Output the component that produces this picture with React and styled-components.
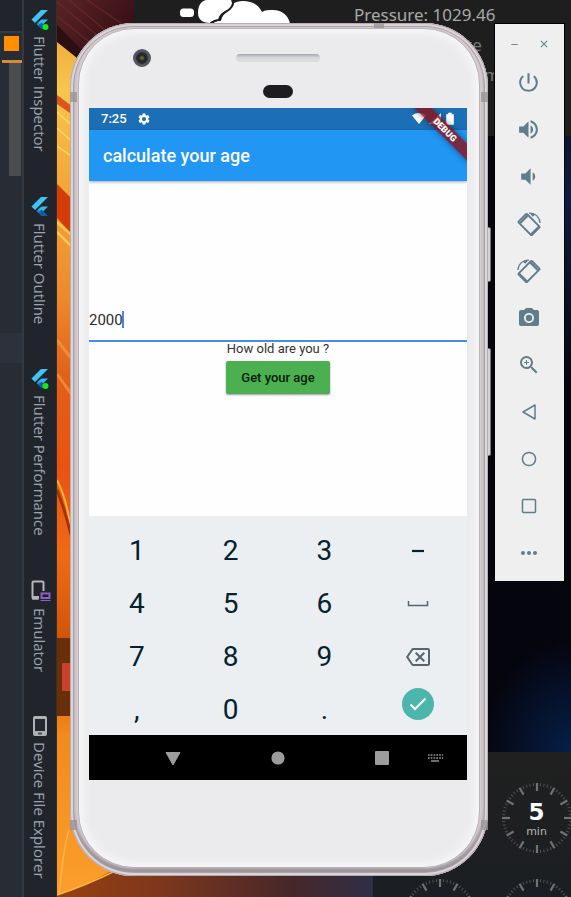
import React, { useState } from "react";
import styled, { createGlobalStyle } from "styled-components";
import {
  MdClose,
  MdMoreHoriz,
  MdOutlineBackspace,
  MdPhotoCamera,
  MdPowerSettingsNew,
  MdRemove,
  MdSettings,
  MdVolumeDown,
  MdVolumeUp,
  MdZoomIn,
} from "react-icons/md";

const GlobalStyle = createGlobalStyle`
  *, *::before, *::after { box-sizing: border-box; }
  body { margin: 0; background: #21252b; }
  button, input { font: inherit; color: inherit; margin: 0; padding: 0; border: 0; background: none; }
  button { cursor: pointer; }
  svg { display: block; flex: none; }
`;

const Page = styled.div`
  display: flex;
  min-height: 100vh;
  overflow: hidden;
  font-family: Roboto, "Liberation Sans", sans-serif;
`;

/* ---------- IDE edge ---------- */

const EditorEdge = styled.aside`
  display: flex;
  flex-direction: column;
  flex: none;
  width: 24px;
  border-right: 2px solid #333841;
  background: #282c34;
`;

const EdgeHeader = styled.div`
  height: 33px;
  border-bottom: 2px solid #333841;
  background: #21252b;
`;

const WarningMark = styled.div`
  width: 15px;
  height: 15px;
  margin: 3px 0 9px 4px;
  background: #ff8f00;
`;

const ErrorStripe = styled.div`
  height: 3px;
  margin-left: 2px;
  background: #d98a35;
`;

const ScrollThumb = styled.div`
  width: 12px;
  height: 113px;
  margin-left: 9px;
  background: #4b4d50;
`;

const CurrentLine = styled.div`
  height: 30px;
  margin-top: 157px;
  background: #2c313c;
`;

const ToolStrip = styled.nav`
  display: flex;
  flex-direction: column;
  align-items: center;
  gap: 44px;
  flex: none;
  width: 33px;
  padding: 9px 1px 0 0;
  border-right: 1px solid #34302c;
  background: #21252b;
`;

const ToolTab = styled.button`
  display: flex;
  flex-direction: column;
  align-items: center;
  gap: 6px;
  color: #9da5b4;
  font-family: "Open Sans", "Noto Sans", sans-serif;
  font-size: 15px;
  line-height: 22px;
  white-space: nowrap;
`;

const TabLabel = styled.span`
  writing-mode: vertical-rl;
`;

/* ---------- Desktop ---------- */

const Desktop = styled.main`
  position: relative;
  z-index: 0;
  display: flex;
  align-items: flex-start;
  flex: 1;
  gap: 7px;
  min-width: 0;
  padding: 23px 7px 21px 13px;
  overflow: hidden;
  background: #05050e;
`;

const WallpaperArt = styled.svg`
  position: absolute;
  inset: 0;
  z-index: -2;
  width: 100%;
  height: 100%;
`;

const WeatherWidget = styled.section`
  position: absolute;
  top: 0;
  left: 77px;
  right: 0;
  z-index: -1;
  display: flex;
  justify-content: space-between;
  height: 136px;
  padding-left: 46px;
  background: #1f1e1e;
`;

const WeatherFacts = styled.div`
  display: flex;
  flex-direction: column;
  width: 217px;
  color: #a9a9a9;
  font-family: "Noto Sans", sans-serif;
  font-size: 17px;
  line-height: 30px;
`;

const Fact = styled.span`
  margin-left: ${(p) => p.$indent || 0}px;
  color: ${(p) => (p.$dim ? "#777777" : "#a9a9a9")};
`;

const TimerWidget = styled.section`
  position: absolute;
  right: 0;
  bottom: 0;
  z-index: -1;
  display: grid;
  grid-template-columns: 97px 97px;
  grid-auto-rows: 96px;
  width: 198px;
  height: 145px;
  padding: 18px 0 0 18px;
  overflow: hidden;
  background: linear-gradient(#202020, #1b1e22);
`;

const Dial = styled.div`
  display: grid;
  place-items: center;

  > * { grid-area: 1 / 1; }
`;

const DialText = styled.div`
  display: flex;
  flex-direction: column;
  align-items: center;
  color: #b5b5b5;
  font-family: "DejaVu Sans", sans-serif;
  font-size: 11px;
  line-height: 13px;
`;

const DialValue = styled.strong`
  color: #ffffff;
  font-size: 23px;
  line-height: 26px;
`;

/* ---------- Phone ---------- */

const PhoneFrame = styled.section`
  position: relative;
  display: flex;
  align-self: stretch;
  flex: 1;
  min-width: 0;
  padding: 5px 8px 8px;
  border-radius: 64px;
  background: #d3cbcf;
  box-shadow:
    inset 0 0 0 1px #b5adb1,
    inset 0 0 0 3px #dcd4d8,
    inset 0 0 0 4px #a9a2a6,
    inset 0 -4px 3px 4px #9b9498;
`;

const PhoneBody = styled.div`
  display: flex;
  flex-direction: column;
  flex: 1;
  min-width: 0;
  padding: 0 12px 0 10px;
  border: 1px solid #b9b2b6;
  border-radius: 56px;
  background: #ebebed;
  box-shadow: inset 0 0 8px 4px #f7f7f9;
`;

const SideKey = styled.span`
  position: absolute;
  top: ${(p) => p.$top}px;
  right: -3px;
  z-index: -1;
  width: 8px;
  height: ${(p) => p.$length}px;
  border: 1px solid #77757a;
  border-radius: 2px;
  background: #d5d3d6;
`;

const AntennaBand = styled.span`
  position: absolute;
  top: ${(p) => p.$top};
  left: ${(p) => p.$left};
  width: ${(p) => (p.$across ? 10 : 7)}px;
  height: ${(p) => (p.$across ? 5 : 10)}px;
  background: #9c9498;
  opacity: 0.8;
`;

const TopBezel = styled.div`
  display: grid;
  grid-template-columns: 1fr 84px 1fr;
  flex: none;
  height: 79px;
  padding-top: 20px;
`;

const CameraLens = styled.div`
  width: 18px;
  height: 18px;
  margin-left: 44px;
  border: 3px solid #55575c;
  border-radius: 50%;
  background: radial-gradient(circle at 50% 50%, #6a6428 0 1px, #22252b 3px, #2d3036 6px);
`;

const EarPiece = styled.div`
  display: flex;
  flex-direction: column;
  align-items: center;
  gap: 23px;
  padding-top: 5px;
`;

const SpeakerSlot = styled.div`
  width: 84px;
  height: 8px;
  border-radius: 4px;
  background: linear-gradient(#a2a6b0, #d6d8dd 45%, #dddee1);
`;

const Sensor = styled.div`
  width: 30px;
  height: 13px;
  border-radius: 7px;
  background: #1d1d21;
`;

const BottomBezel = styled.div`
  flex: none;
  height: 87px;
`;

const Screen = styled.div`
  position: relative;
  display: flex;
  flex-direction: column;
  flex: 1;
  overflow: hidden;
  background: #fefefe;
`;

const StatusBar = styled.div`
  display: flex;
  align-items: center;
  flex: none;
  gap: 10px;
  height: 22px;
  padding: 0 12px;
  background: #1c6fb5;
  color: #ffffff;
  font-size: 13px;
  line-height: 22px;
  font-weight: 500;
`;

const StatusIcons = styled.div`
  display: flex;
  align-items: center;
  gap: 3px;
  margin-left: auto;
`;

const AppBar = styled.header`
  display: flex;
  align-items: center;
  flex: none;
  height: 51px;
  padding: 0 14px;
  background: #2196f3;
  box-shadow: 0 1px 3px rgba(0, 0, 0, 0.35);
  color: #ffffff;
`;

const AppTitle = styled.h1`
  margin: 0;
  font-size: 18px;
  line-height: 24px;
  font-weight: 500;
`;

const DebugBanner = styled.span`
  position: absolute;
  top: 16px;
  right: -18px;
  width: 80px;
  height: 12px;
  background: rgba(140, 16, 24, 0.8);
  box-shadow: 0 0 6px rgba(0, 0, 0, 0.45);
  color: #ffffff;
  font-size: 9px;
  line-height: 12px;
  font-weight: 900;
  text-align: center;
  transform: rotate(45deg);
`;

const AgeForm = styled.form`
  display: flex;
  flex-direction: column;
  align-items: center;
  justify-content: center;
  flex: 1;
  min-height: 160px;
`;

const FieldRow = styled.label`
  display: flex;
  align-items: center;
  align-self: stretch;
  height: 47px;
  padding-top: 4px;
  border-bottom: 2px solid #4390e0;
`;

const YearInput = styled.input`
  height: 20px;
  outline: none;
  color: #2b2b2b;
  font-size: 15px;
  line-height: 20px;
  caret-color: transparent;
`;

const Caret = styled.span`
  width: 2px;
  height: 17px;
  margin-left: -1px;
  background: #4285f4;
`;

const Question = styled.p`
  margin: 0 0 5px;
  color: #333333;
  font-size: 13px;
  line-height: 14px;
`;

const SubmitButton = styled.button`
  height: 33px;
  margin-bottom: 8px;
  padding: 0 15px;
  border-radius: 2px;
  background: #4caf50;
  box-shadow: 0 1px 2px rgba(0, 0, 0, 0.4);
  color: #06210a;
  font-size: 13px;
  line-height: 16px;
  font-weight: 500;
`;

const Keypad = styled.div`
  display: grid;
  grid-template-columns: repeat(4, 1fr);
  grid-auto-rows: 53px;
  flex: none;
  padding: 7px 2px 0 1px;
  background: #ebeff2;
`;

const Key = styled.button`
  display: flex;
  align-items: center;
  justify-content: center;
  padding-top: 2px;
  color: ${(p) => (p.$muted ? "#56656e" : "#06222e")};
  font-size: 28px;
  line-height: 50px;
`;

const DoneKey = styled.button`
  align-self: start;
  justify-self: center;
  display: grid;
  place-items: center;
  width: 32px;
  height: 32px;
  margin-top: 6px;
  border-radius: 50%;
  background: #4db6ac;
`;

const NavBar = styled.nav`
  display: flex;
  align-items: center;
  flex: none;
  gap: 13px;
  height: 45px;
  padding: 0 12px 0 64px;
  background: #000000;
`;

const NavGroup = styled.div`
  display: flex;
  justify-content: space-between;
  flex: 1;
`;

const NavButton = styled.button`
  display: grid;
  place-items: center;
  width: 40px;
  height: 45px;
`;

/* ---------- Emulator toolbar ---------- */

const EmulatorBar = styled.aside`
  flex: none;
  width: 71px;
  margin-right: -1px;
  margin-left: -1px;
  padding: 0 2px 5px 0;
  border: 1px solid #000000;
  background: #efefef;
  color: #607d8b;
`;

const WindowControls = styled.div`
  display: flex;
  justify-content: space-between;
  padding: 12px 11px 7px 12px;
`;

const ControlButton = styled.button`
  display: grid;
  place-items: center;
  width: 14px;
  height: 16px;
`;

const BarButton = styled.button`
  display: grid;
  place-items: center;
  width: 100%;
  height: 47px;
`;

/* ---------- Drawings ---------- */

function FlutterLogo({ dot }) {
  return (
    <svg width="22" height="21" viewBox="0 0 22 21" aria-hidden="true">
      <path d="M12 1h7L6 14l-3.500-3.500z" fill="#40c4f4" />
      <path d="M12.500 10.500H19L12.500 17 9 13.500z" fill="#35b8ee" />
      <path d="M9 13.500l3.500 3.500L9.500 17 7.500 15z" fill="#2196d8" />
      <path d="M9 17l3.500-3.500L19 20h-6.500z" fill="#0d5ea8" />
      {dot && <circle cx="16.500" cy="18" r="3" fill="#10f010" />}
    </svg>
  );
}

function EmulatorIcon() {
  return (
    <svg width="22" height="22" viewBox="0 0 22 22" aria-hidden="true">
      <path d="M9 18.500H4.500a1 1 0 0 1-1-1v-15a1 1 0 0 1 1-1h9a1 1 0 0 1 1 1V11" fill="none" stroke="#b4b6b8" strokeWidth="2" />
      <path d="M3 16h7v3.500H3z" fill="#b4b6b8" />
      <path d="M12.500 13.500h8v4.500h-8z" fill="#211b30" stroke="#8763bd" strokeWidth="2" />
      <path d="M11.500 20.500h10" stroke="#8763bd" strokeWidth="1" />
    </svg>
  );
}

function DeviceIcon() {
  return (
    <svg width="22" height="20" viewBox="0 0 22 20" aria-hidden="true">
      <rect x="4" y="0" width="14" height="20" rx="2" fill="#b0b2b4" />
      <rect x="6" y="3" width="10" height="12" fill="#25292f" />
      <rect x="9" y="16.500" width="4" height="2" fill="#4b4d50" />
    </svg>
  );
}

function CloudArt() {
  return (
    <svg width="128" height="24" viewBox="0 0 128 24" aria-hidden="true">
      <g fill="#ffffff">
        <rect x="0" y="8.500" width="14" height="8.500" rx="3.500" />
        <path d="M18 13C18 5 22 0 27 0h24c2 4 1 8-4 11-6 1-8 5-9 9-3 0-6 1-8 3-8 0-12-4-12-10z" />
        <path d="M33 24c1-2 4-3.500 8-3.500C42 15 44 13 47 11c3-6 8-10 16-10 9 0 16 4 19 11 3-2 7-2 11-2 9 0 16 6 17 14z" />
      </g>
      <path d="M53 0c1 5-1 8-6 11-4 2-6 5-7 9-4 0-7 1-10 4" fill="none" stroke="#1f1e1e" strokeWidth="2" />
    </svg>
  );
}

function RotateIcon({ left }) {
  return (
    <svg width="24" height="24" viewBox="0 0 24 24" aria-hidden="true">
      <g transform={left ? "translate(24 0) scale(-1 1)" : undefined}>
        <rect
          x="2.500"
          y="6.500"
          width="19"
          height="12"
          rx="1"
          fill="none"
          stroke="#607d8b"
          strokeWidth="1.800"
          transform="rotate(45 12 12.500)"
        />
        <path d="M13.400 21.600 21.600 13.400 23 15.200l-7.800 7.800z" fill="#607d8b" />
        <path d="M2.200 10.400 10 2.600l1.600 1.600-7.800 7.800z" fill="#607d8b" />
        <path d="M12 1.200C18 .6 22.800 5 23 11" fill="none" stroke="#607d8b" strokeWidth="1.300" />
        <path d="M12.500 1.200 18.500 2.400 15.800 4.800z" fill="#607d8b" />
      </g>
    </svg>
  );
}

function OutlineIcon({ shape }) {
  return (
    <svg width="18" height="18" viewBox="0 0 18 18" fill="none" stroke="#607d8b" strokeWidth="1.500" aria-hidden="true">
      {shape === "back" && <path d="M15 2v14L3 9z" strokeLinejoin="round" />}
      {shape === "home" && <circle cx="9" cy="9" r="6.600" />}
      {shape === "recent" && <rect x="2.500" y="2.500" width="13" height="13" rx="1" />}
    </svg>
  );
}

function NavIcon({ shape }) {
  return (
    <svg width="16" height="16" viewBox="0 0 16 16" fill="#9c9c9c" aria-hidden="true">
      {shape === "back" && <path d="M1 2.500h14L8 15z" stroke="#9c9c9c" strokeLinejoin="round" />}
      {shape === "home" && <circle cx="8" cy="8" r="6.600" />}
      {shape === "recent" && <rect x="1" y="1" width="14" height="14" rx="1" />}
      {shape === "keyboard" && (
        <path d="M1 5h15M1 8h15" stroke="#9c9c9c" strokeWidth="1.400" strokeDasharray="1.600 1.200" />
      )}
      {shape === "keyboard" && <path d="M4 11h8" stroke="#9c9c9c" strokeWidth="1.400" />}
    </svg>
  );
}

function SignalIcons() {
  return (
    <svg width="43" height="14" viewBox="0 0 43 14" fill="#ffffff" aria-hidden="true">
      <path d="M0 3.500C4 .2 10 .2 14 3.500L7 12z" />
      <path d="M29 1v11H17z" />
      <path d="M34.500 2.500H36.500V1h3v1.500h2v10h-7z" stroke="#ffffff" strokeWidth=".6" strokeLinejoin="round" />
    </svg>
  );
}

function SpaceIcon() {
  return (
    <svg width="22" height="8" viewBox="0 0 22 8" aria-hidden="true">
      <path d="M1.500 1v4.500h19V1" fill="none" stroke="#56656e" strokeWidth="1.500" />
    </svg>
  );
}

function MinusIcon() {
  return (
    <svg width="12" height="4" viewBox="0 0 12 4" aria-hidden="true">
      <path d="M0 2h12" stroke="#06222e" strokeWidth="2.200" />
    </svg>
  );
}

function CheckIcon() {
  return (
    <svg width="20" height="20" viewBox="0 0 20 20" aria-hidden="true">
      <path d="M2.500 10.500l4.500 4.500L17.500 4.500" fill="none" stroke="#ffffff" strokeWidth="2" />
    </svg>
  );
}

function DialFace() {
  const ticks = Array.from({ length: 60 }, (_, i) => i);
  return (
    <svg width="72" height="72" viewBox="-36 -36 72 72" aria-hidden="true">
      {ticks.map((i) => (
        <line
          key={i}
          x1="0"
          x2="0"
          y1="-35"
          y2={i % 5 ? -32 : -27}
          stroke={i % 5 ? "#515354" : "#707273"}
          strokeWidth={i % 5 ? 1 : 2.2}
          transform={`rotate(${i * 6})`}
        />
      ))}
    </svg>
  );
}

function Wallpaper() {
  return (
    <WallpaperArt viewBox="0 0 515 897" preserveAspectRatio="xMinYMin slice" aria-hidden="true">
      <defs>
        <linearGradient id="flame" x1="0" y1="0" x2="0" y2="1">
          <stop offset="0" stopColor="#e99a35" />
          <stop offset="0.100" stopColor="#f8c64a" />
          <stop offset="0.200" stopColor="#f3a83a" />
          <stop offset="0.330" stopColor="#ee8a2c" />
          <stop offset="0.420" stopColor="#e2601a" />
          <stop offset="0.520" stopColor="#ea5212" />
          <stop offset="0.620" stopColor="#f06a14" />
          <stop offset="0.720" stopColor="#cf5209" />
          <stop offset="0.820" stopColor="#f28a1c" />
          <stop offset="1" stopColor="#fb9f2c" />
        </linearGradient>
        <linearGradient id="maroon" x1="0" y1="0" x2="1" y2="1">
          <stop offset="0" stopColor="#5a2326" />
          <stop offset="0.500" stopColor="#3a1216" />
          <stop offset="1" stopColor="#4a1414" />
        </linearGradient>
        <linearGradient id="ember" x1="0" y1="0" x2="1" y2="0">
          <stop offset="0" stopColor="#97400f" />
          <stop offset="0.300" stopColor="#7e371d" />
          <stop offset="0.700" stopColor="#45272a" />
          <stop offset="1" stopColor="#27304f" />
        </linearGradient>
        <linearGradient id="night" x1="0" y1="0" x2="0" y2="1">
          <stop offset="0" stopColor="#0b1630" />
          <stop offset="0.100" stopColor="#0e1d40" />
          <stop offset="0.400" stopColor="#06060f" />
          <stop offset="1" stopColor="#05050e" />
        </linearGradient>
        <radialGradient id="glow" cx="1" cy="1" r="1">
          <stop offset="0" stopColor="#061f48" />
          <stop offset="1" stopColor="#061f48" stopOpacity="0" />
        </radialGradient>
      </defs>
      <rect x="0" y="0" width="90" height="897" fill="url(#flame)" />
      <path d="M0 35 30 60 90 110V0H0z" fill="url(#maroon)" />
      <path d="M0 2 70 60M12 0 60 40M0 16 40 48M30 0 80 34" stroke="#6e2a2e" strokeWidth="1.500" opacity="0.7" />
      <path d="M0 25 30 55V66L0 42z" fill="#2b0f12" />
      <path d="M0 95 20 110V118L0 104z" fill="#d8551c" />
      <path d="M0 112 20 130M0 128 20 146M0 146 20 160" stroke="#fbe27a" strokeWidth="1.500" opacity="0.7" />
      <path d="M0 184 20 204V240L0 218z" fill="#d53c08" />
      <path d="M0 222 20 240M0 232 20 252" stroke="#ffd75a" strokeWidth="2.500" opacity="0.8" />
      <path d="M0 340 20 366M0 374 20 402" stroke="#f59a42" strokeWidth="3" opacity="0.7" />
      <path d="M0 480Q10 500 14 530" fill="none" stroke="#ffb238" strokeWidth="2" />
      <path d="M0 490Q8 510 14 535" fill="none" stroke="#a83208" strokeWidth="3" />
      <rect x="0" y="638" width="30" height="78" fill="#6a2e08" />
      <rect x="5" y="663" width="30" height="28" rx="1" fill="#c9422a" />
      <path d="M2 897Q6 850 12 830" fill="none" stroke="#ffb14a" strokeWidth="1.500" />
      <path d="M0 895Q30 885 60 868H340V897H0z" fill="url(#ember)" />
      <path d="M0 895Q30 885 60 870" fill="none" stroke="#ffb347" strokeWidth="1.500" />
      <rect x="400" y="130" width="115" height="622" fill="#05050e" />
      <rect x="500" y="136" width="15" height="616" fill="url(#night)" />
      <rect x="425" y="640" width="90" height="112" fill="url(#glow)" />
    </WallpaperArt>
  );
}

/* ---------- Page ---------- */

const TOOL_TABS = [
  { label: "Flutter Inspector", icon: <FlutterLogo dot /> },
  { label: "Flutter Outline", icon: <FlutterLogo /> },
  { label: "Flutter Performance", icon: <FlutterLogo dot /> },
  { label: "Emulator", icon: <EmulatorIcon /> },
  { label: "Device File Explorer", icon: <DeviceIcon /> },
];

const EMULATOR_ACTIONS = [
  { label: "Power", icon: <MdPowerSettingsNew size={25} /> },
  { label: "Volume up", icon: <MdVolumeUp size={25} /> },
  { label: "Volume down", icon: <MdVolumeDown size={25} /> },
  { label: "Rotate left", icon: <RotateIcon /> },
  { label: "Rotate right", icon: <RotateIcon left /> },
  { label: "Take screenshot", icon: <MdPhotoCamera size={24} /> },
  { label: "Zoom", icon: <MdZoomIn size={24} /> },
  { label: "Back", icon: <OutlineIcon shape="back" /> },
  { label: "Home", icon: <OutlineIcon shape="home" /> },
  { label: "Overview", icon: <OutlineIcon shape="recent" /> },
  { label: "More", icon: <MdMoreHoriz size={24} /> },
];

const KEYS = ["1", "2", "3", "-", "4", "5", "6", "space", "7", "8", "9", "delete", ",", "0", "."];

function KeyFace({ name }) {
  if (name === "space") return <SpaceIcon />;
  if (name === "delete") return <MdOutlineBackspace size={24} />;
  if (name === "-") return <MinusIcon />;
  return name;
}

export default function App() {
  const [year, setYear] = useState("2000");

  const press = (key) => {
    if (key === "delete") setYear(year.slice(0, -1));
    else setYear(year + (key === "space" ? " " : key));
  };

  return (
    <Page>
      <GlobalStyle />
      <EditorEdge>
        <EdgeHeader />
        <WarningMark />
        <ErrorStripe />
        <ScrollThumb />
        <CurrentLine />
      </EditorEdge>
      <ToolStrip>
        {TOOL_TABS.map((tab) => (
          <ToolTab key={tab.label} type="button">
            {tab.icon}
            <TabLabel>{tab.label}</TabLabel>
          </ToolTab>
        ))}
      </ToolStrip>

      <Desktop>
        <Wallpaper />
        <WeatherWidget>
          <CloudArt />
          <WeatherFacts>
            <Fact>Pressure: 1029.46</Fact>
            <Fact $indent={112} $dim>te</Fact>
            <Fact $indent={130} $dim>m</Fact>
          </WeatherFacts>
        </WeatherWidget>
        <TimerWidget>
          <Dial />
          <Dial>
            <DialFace />
            <DialText>
              <DialValue>5</DialValue>
              <span>min</span>
            </DialText>
          </Dial>
          <Dial>
            <DialFace />
          </Dial>
          <Dial>
            <DialFace />
          </Dial>
        </TimerWidget>

        <PhoneFrame>
          <SideKey $top={204} $length={55} />
          <SideKey $top={325} $length={108} />
          <PhoneBody>
            <TopBezel>
              <CameraLens />
              <EarPiece>
                <SpeakerSlot />
                <Sensor />
              </EarPiece>
            </TopBezel>
            <Screen>
              <StatusBar>
                7:25
                <MdSettings size={14} />
                <StatusIcons>
                  <SignalIcons />
                </StatusIcons>
              </StatusBar>
              <AppBar>
                <AppTitle>calculate your age</AppTitle>
              </AppBar>
              <DebugBanner>DEBUG</DebugBanner>
              <AgeForm onSubmit={(e) => e.preventDefault()}>
                <FieldRow>
                  <YearInput
                    aria-label="Year of birth"
                    value={year}
                    onChange={(e) => setYear(e.target.value)}
                    style={{ width: `${year.length}ch` }}
                  />
                  <Caret />
                </FieldRow>
                <Question>How old are you ?</Question>
                <SubmitButton type="submit">Get your age</SubmitButton>
              </AgeForm>
              <Keypad>
                {KEYS.map((key) => (
                  <Key
                    key={key}
                    type="button"
                    aria-label={key}
                    $muted={key.length > 1}
                    onClick={() => press(key)}
                  >
                    <KeyFace name={key} />
                  </Key>
                ))}
                <DoneKey type="button" aria-label="Done">
                  <CheckIcon />
                </DoneKey>
              </Keypad>
              <NavBar>
                <NavGroup>
                  <NavButton aria-label="Back"><NavIcon shape="back" /></NavButton>
                  <NavButton aria-label="Home"><NavIcon shape="home" /></NavButton>
                  <NavButton aria-label="Recent apps"><NavIcon shape="recent" /></NavButton>
                </NavGroup>
                <NavButton aria-label="Switch keyboard"><NavIcon shape="keyboard" /></NavButton>
              </NavBar>
            </Screen>
            <BottomBezel />
          </PhoneBody>
          <AntennaBand $top="69px" $left="0" />
          <AntennaBand $top="69px" $left="calc(100% - 7px)" />
          <AntennaBand $top="calc(100% - 56px)" $left="0" />
          <AntennaBand $top="calc(100% - 56px)" $left="calc(100% - 7px)" />
          <AntennaBand $top="0" $left="calc(100% - 114px)" $across />
        </PhoneFrame>

        <EmulatorBar>
          <WindowControls>
            <ControlButton aria-label="Minimize"><MdRemove size={11} /></ControlButton>
            <ControlButton aria-label="Close"><MdClose size={12} /></ControlButton>
          </WindowControls>
          {EMULATOR_ACTIONS.map((action) => (
            <BarButton key={action.label} type="button" aria-label={action.label}>
              {action.icon}
            </BarButton>
          ))}
        </EmulatorBar>
      </Desktop>
    </Page>
  );
}
